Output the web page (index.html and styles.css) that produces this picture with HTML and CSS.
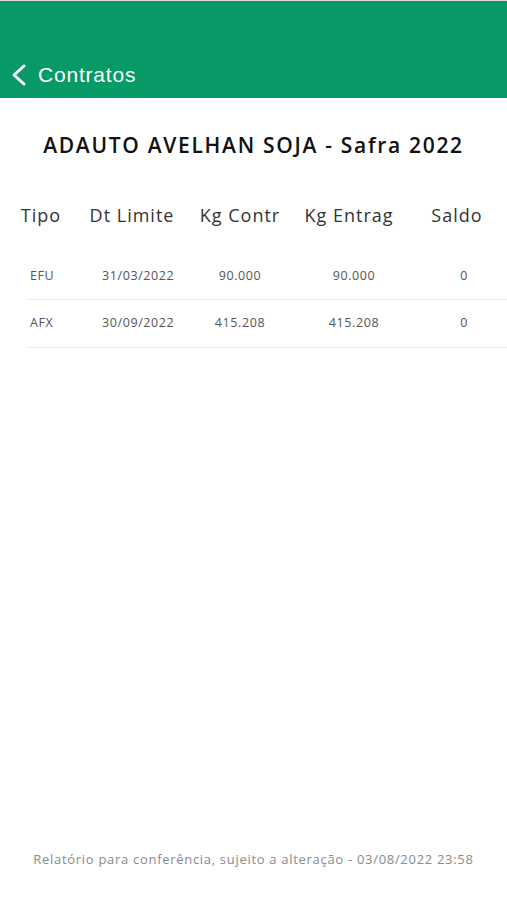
FILE: index.html
```html
<!DOCTYPE html>
<html lang="pt-BR">
<head>
  <meta charset="UTF-8">
  <title>Contratos</title>
  <link rel="stylesheet" href="styles.css">
</head>
<body>

<div class="topbar">
  <a class="back" href="#">
    <svg class="chevron" width="18" height="24" viewBox="0 0 18 24">
      <polyline points="14,3 4,12 14,21" fill="none" stroke="#fff" stroke-width="3" stroke-linecap="round" stroke-linejoin="round"/>
    </svg>
    <span>Contratos</span>
  </a>
</div>

<h2 class="title">ADAUTO AVELHAN SOJA - Safra 2022</h2>

<div class="table">
  <div class="head">
    <div>Tipo</div>
    <div>Dt Limite</div>
    <div>Kg Contr</div>
    <div>Kg Entrag</div>
    <div class="saldo">Saldo</div>
  </div>
  <div class="row">
    <div class="tipo">EFU</div>
    <div>31/03/2022</div>
    <div class="num">90.000</div>
    <div class="num">90.000</div>
    <div class="num">0</div>
  </div>
  <div class="row">
    <div class="tipo">AFX</div>
    <div>30/09/2022</div>
    <div class="num">415.208</div>
    <div class="num">415.208</div>
    <div class="num">0</div>
  </div>
</div>

<p class="footer">Relatório para conferência, sujeito a alteração - 03/08/2022 23:58</p>

</body>
</html>
```

FILE: styles.css
```css
html, body {
  height: 100%;
}

body {
  margin: 0;
  background: #fff;
  font-family: "Open Sans", "DejaVu Sans", sans-serif;
  color: #222;
  display: flex;
  flex-direction: column;
  border-top: 1px solid #dcdcdc;
  box-sizing: border-box;
}

.topbar {
  background: #089a66;
  height: 97px;
  display: flex;
  align-items: flex-end;
  padding: 0 0 11px 10px;
  box-sizing: border-box;
}

.back {
  display: flex;
  align-items: center;
  gap: 10px;
  color: #fff;
  text-decoration: none;
  font-family: "Liberation Sans", Arial, sans-serif;
  font-size: 21px;
  letter-spacing: 0.8px;
}

.title {
  margin: 33px 0 0;
  text-align: center;
  font-size: 21px;
  font-weight: 600;
  color: #111;
  letter-spacing: 1.7px;
}

.table {
  margin-top: 44px;
}

.head {
  display: grid;
  grid-template-columns: 82px 100px 116px 102px 1fr;
  text-align: center;
  font-size: 18px;
  letter-spacing: 1px;
  color: #333;
  margin-bottom: 27px;
}

.head .saldo {
  padding-left: 7px;
}

.row {
  display: grid;
  grid-template-columns: 76px 106px 64px 164px 56px;
  margin-left: 26px;
  height: 46px;
  padding-bottom: 2px;
  box-sizing: border-box;
  align-items: center;
  font-size: 12.5px;
  letter-spacing: 0.6px;
  color: #555;
  border-bottom: 1.5px solid #ebebeb;
}

.row + .row {
  height: 47.5px;
}

.row .tipo {
  padding-left: 4px;
}

.row .num {
  text-align: center;
}

.footer {
  margin: auto 0 32px;
  text-align: center;
  font-size: 13px;
  letter-spacing: 0.7px;
  color: #8a8a8a;
}
```
